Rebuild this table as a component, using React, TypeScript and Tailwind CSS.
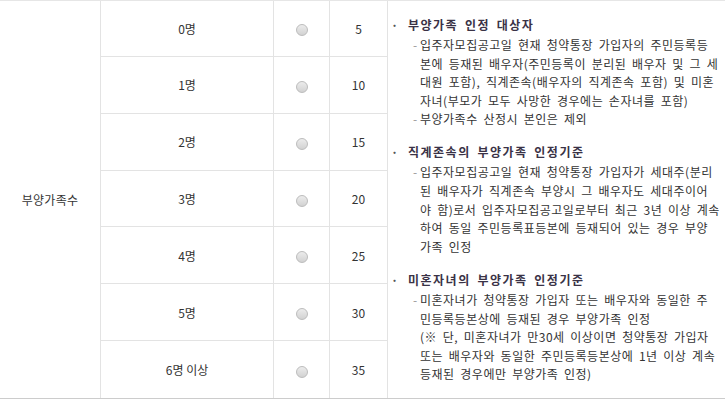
import React from "react";

const rows = [
  { label: "0명", score: "5" },
  { label: "1명", score: "10" },
  { label: "2명", score: "15" },
  { label: "3명", score: "20" },
  { label: "4명", score: "25" },
  { label: "5명", score: "30" },
  { label: "6명 이상", score: "35" },
];

const sections: { title: string; items: string[][] }[] = [
  {
    title: "부양가족 인정 대상자",
    items: [
      [
        "입주자모집공고일 현재 청약통장 가입자의 주민등록등",
        "본에 등재된 배우자(주민등록이 분리된 배우자 및 그 세",
        "대원 포함), 직계존속(배우자의 직계존속 포함) 및 미혼",
        "자녀(부모가 모두 사망한 경우에는 손자녀를 포함)",
      ],
      ["부양가족수 산정시 본인은 제외"],
    ],
  },
  {
    title: "직계존속의 부양가족 인정기준",
    items: [
      [
        "입주자모집공고일 현재 청약통장 가입자가 세대주(분리",
        "된 배우자가 직계존속 부양시 그 배우자도 세대주이어",
        "야 함)로서 입주자모집공고일로부터 최근 3년 이상 계속",
        "하여 동일 주민등록표등본에 등재되어 있는 경우 부양",
        "가족 인정",
      ],
    ],
  },
  {
    title: "미혼자녀의 부양가족 인정기준",
    items: [
      [
        "미혼자녀가 청약통장 가입자 또는 배우자와 동일한 주",
        "민등록등본상에 등재된 경우 부양가족 인정",
        "(※ 단, 미혼자녀가 만30세 이상이면 청약통장 가입자",
        "또는 배우자와 동일한 주민등록등본상에 1년 이상 계속",
        "등재된 경우에만 부양가족 인정)",
      ],
    ],
  },
];

export default function App() {
  return (
    <div
      className="w-[725px] h-[402px] bg-white text-[12px] text-[#333] overflow-hidden"
      style={{ fontFamily: '"Noto Sans CJK KR", "Noto Sans", sans-serif' }}
    >
      <div className="flex border-t border-[#e6e6e6] border-b border-b-[#cccccc] h-[399px]">
        {/* col 1 */}
        <div className="w-[101px] border-r border-[#e3e3e3] flex items-center justify-center tracking-[0.3px]">
          부양가족수
        </div>
        {/* cols 2-4 */}
        <div className="flex flex-col w-[287px] border-r border-[#e3e3e3]">
          {rows.map((r, i) => (
            <div
              key={r.label}
              className={`flex ${i === 0 ? "h-[56px]" : "h-[57px]"} ${
                i < rows.length - 1 ? "border-b border-[#e3e3e3]" : ""
              }`}
            >
              <div className="w-[173px] border-r border-[#e3e3e3] flex items-center justify-center pt-[1px]">
                {r.label}
              </div>
              <div className="w-[56px] border-r border-[#e3e3e3] flex items-center justify-center pt-[4px]">
                <span className="block w-[12px] h-[12px] rounded-full border border-[#bcbcbc] bg-linear-to-b from-[#ececec] to-[#d2d2d2]" />
              </div>
              <div className="flex-1 flex items-center justify-center pt-[1px]">
                {r.score}
              </div>
            </div>
          ))}
        </div>
        {/* col 5 */}
        <div className="flex-1 pt-[14px] pl-[2px] tracking-[0.5px] [word-spacing:2.5px]">
          {sections.map((s, si) => (
            <div key={s.title} className={si > 0 ? "mt-[13.5px]" : ""}>
              <div className="flex leading-[19px] font-bold text-[#3a3246]">
                <span className="w-[18px] pl-[1px] text-[#555]">·</span>
                <span className="tracking-[1.5px]">{s.title}</span>
              </div>
              <div className="mt-[2px]">
                {s.items.map((lines, ii) => (
                  <div key={ii} className="flex pl-[23px] leading-[18.6px]">
                    <span className="w-[7px] text-[#999]">-</span>
                    <div>
                      {lines.map((l) => (
                        <div key={l} className="whitespace-nowrap">
                          {l}
                        </div>
                      ))}
                    </div>
                  </div>
                ))}
              </div>
            </div>
          ))}
        </div>
      </div>
    </div>
  );
}
